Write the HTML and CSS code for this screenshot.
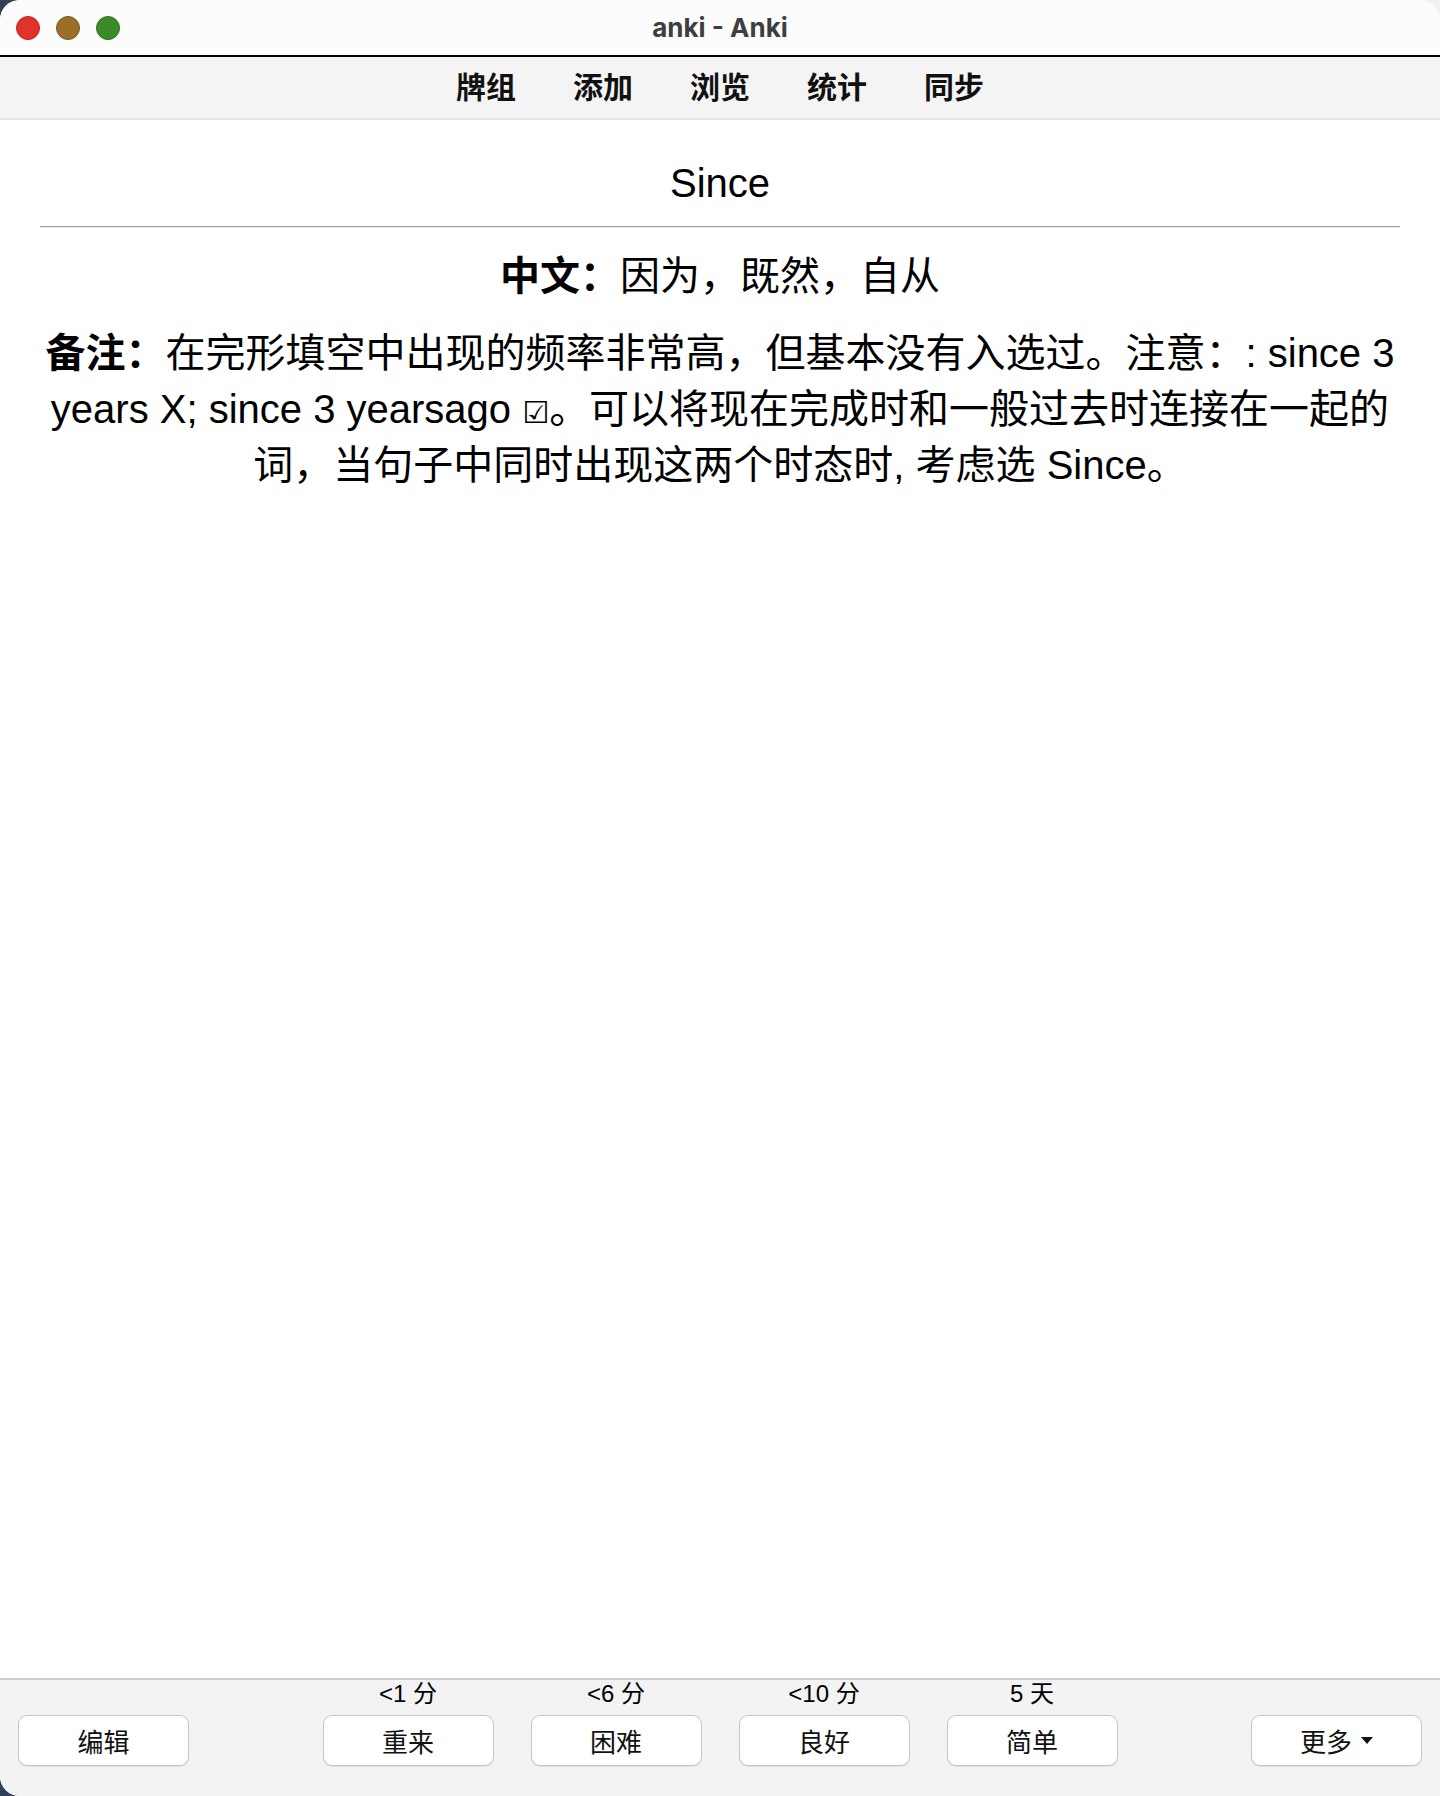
FILE: index.html
```html
<!DOCTYPE html>
<html>
<head>
    <meta charset="utf-8">
    <title>anki - Anki</title>
    <link rel="stylesheet" href="styles.css">
</head>
<body>
    <div class="window">
        <div class="titlebar">
            <div class="lights">
                <span class="light close"></span>
                <span class="light minimize"></span>
                <span class="light zoom"></span>
            </div>
            <div class="title">anki - Anki</div>
            <div></div>
        </div>

        <div class="toolbar">
            <a class="tab">牌组</a>
            <a class="tab">添加</a>
            <a class="tab">浏览</a>
            <a class="tab">统计</a>
            <a class="tab">同步</a>
        </div>

        <div class="card">
            <div class="front">Since</div>
            <hr class="answer-line">
            <div class="field"><b>中文：</b>因为，既然，自从</div>
            <div class="field note"><b>备注：</b>在完形填空中出现的频率非常高，但基本没有入选过。注意：: since 3 years X; since 3 yearsago <span class="check">☑</span>。可以将现在完成时和一般过去时连接在一起的词，当句子中同时出现这两个时态时, 考虑选 Since。</div>
        </div>

        <div class="bottombar">
            <button class="btn">编辑</button>
            <div class="answers">
                <div class="answer"><span class="due">&lt;1 分</span><button class="btn">重来</button></div>
                <div class="answer"><span class="due">&lt;6 分</span><button class="btn">困难</button></div>
                <div class="answer"><span class="due">&lt;10 分</span><button class="btn">良好</button></div>
                <div class="answer"><span class="due">5 天</span><button class="btn">简单</button></div>
            </div>
            <button class="btn more">更多<span class="caret"></span></button>
        </div>
    </div>
</body>
</html>
```

FILE: styles.css
```css
body {
    margin: 0;
    height: 100vh;
    /* desktop peeking out behind the rounded corners */
    background: linear-gradient(to right, #2f4157 50%, #f2f2f2 50%);
    font-family: "Liberation Sans", "DejaVu Sans", "Noto Sans CJK SC", sans-serif;
    color: #000;
}

.window {
    height: 100vh;
    display: flex;
    flex-direction: column;
    border-radius: 20px;
    overflow: hidden;
    background-color: #fff;
}

/* Title bar */
.titlebar {
    height: 55px;
    flex-shrink: 0;
    display: grid;
    grid-template-columns: 1fr auto 1fr;
    align-items: center;
    background-color: #fcfcfc;
    border-bottom: 2px solid #000;
}

.lights {
    display: flex;
    gap: 16px;
    padding-left: 16px;
}

.light {
    width: 22px;
    height: 22px;
    border-radius: 50%;
    border: 1px solid;
}

.close {
    background-color: #e0342a;
    border-color: #c1271e;
}

.minimize {
    background-color: #9b6f28;
    border-color: #7c5820;
}

.zoom {
    background-color: #3b8a27;
    border-color: #2e6e1e;
}

.title {
    font-family: Inter, "Liberation Sans", sans-serif;
    font-weight: 700;
    font-size: 26px;
    color: #3e3e3e;
}

/* Top toolbar */
.toolbar {
    height: 63px;
    flex-shrink: 0;
    box-sizing: border-box;
    padding-bottom: 5px;
    display: flex;
    justify-content: center;
    align-items: center;
    gap: 57px;
    background-color: #f4f4f4;
    border-bottom: 2px solid #e3e3e3;
}

.tab {
    font-family: "Noto Sans CJK SC", sans-serif;
    font-weight: 700;
    font-size: 30px;
    color: #111;
    cursor: pointer;
}

/* Card */
.card {
    flex: 1;
    padding: 40px;
    text-align: center;
    font-size: 40px;
}

.front {
    line-height: 46px;
}

.answer-line {
    margin: 20px 0;
    height: 0;
    border: 0;
    border-top: 1px solid #9a9a9a;
    border-bottom: 1px solid #ececec;
}

.field {
    line-height: 56px;
}

.note {
    margin-top: 21px;
}

/* small checkbox glyph, kept from stretching its line */
.check {
    font-size: 30px;
    line-height: 0;
}

/* Answer bar */
.bottombar {
    height: 118px;
    flex-shrink: 0;
    box-sizing: border-box;
    display: flex;
    justify-content: space-between;
    align-items: flex-end;
    padding: 2px 18px 30px;
    background-color: #f3f3f3;
    border-top: 2px solid #cbcbcb;
}

.answers {
    display: flex;
    gap: 37px;
}

.answer {
    display: flex;
    flex-direction: column;
    align-items: center;
    gap: 7px;
}

.due {
    font-size: 24px;
    line-height: 28px;
}

.btn {
    width: 171px;
    height: 51px;
    display: flex;
    justify-content: center;
    align-items: center;
    gap: 9px;
    padding: 0;
    font-family: "Liberation Sans", "Noto Sans CJK SC", sans-serif;
    font-size: 26px;
    color: #111;
    background-color: #fff;
    border: 1px solid #c6c6c6;
    border-radius: 9px;
    box-shadow: 0 1px 1px rgba(0, 0, 0, 0.08);
    cursor: pointer;
}

.caret {
    width: 0;
    height: 0;
    border-left: 6px solid transparent;
    border-right: 6px solid transparent;
    border-top: 7px solid #111;
}
```
